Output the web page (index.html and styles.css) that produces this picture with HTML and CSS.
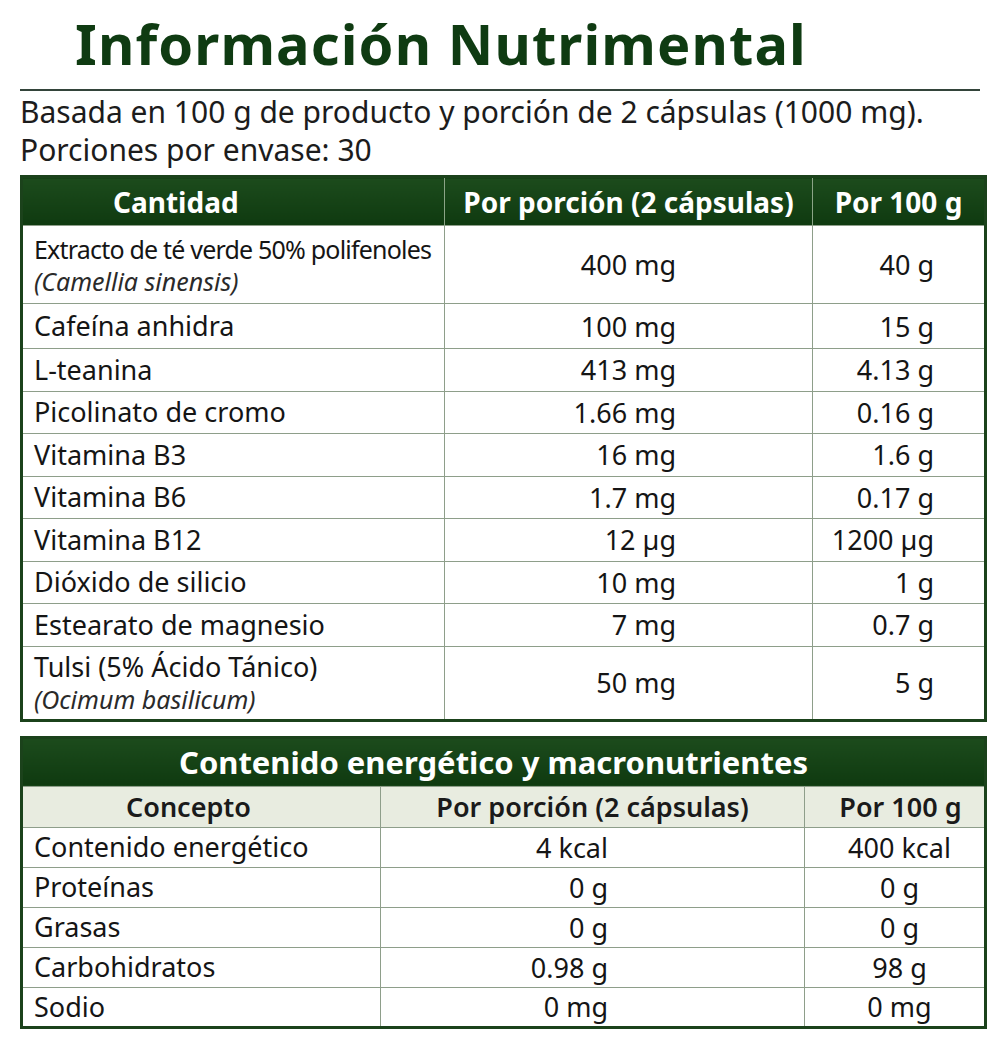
FILE: index.html
```html
<!DOCTYPE html>
<html lang="es">
<head>
<meta charset="utf-8">
<title>Información Nutrimental</title>
<link rel="stylesheet" href="styles.css">
</head>
<body>
<div class="page">
  <h1 class="title">Información Nutrimental</h1>
  <div class="rule"></div>
  <p class="intro">Basada en 100 g de producto y porción de 2 cápsulas (1000 mg).<br>Porciones por envase: 30</p>

  <table class="nt main">
    <colgroup><col class="c1"><col class="c2"><col class="c3"></colgroup>
    <thead>
      <tr class="head"><th class="h-name">Cantidad</th><th>Por porción (2 cápsulas)</th><th>Por 100 g</th></tr>
    </thead>
    <tbody>
      <tr class="tall1"><td class="name two"><span class="narrow">Extracto de té verde 50% polifenoles</span><br><em>(Camellia sinensis)</em></td><td class="v2">400 mg</td><td class="v3">40 g</td></tr>
      <tr class="r46"><td class="name">Cafeína anhidra</td><td class="v2">100 mg</td><td class="v3">15 g</td></tr>
      <tr><td class="name">L-teanina</td><td class="v2">413 mg</td><td class="v3">4.13 g</td></tr>
      <tr><td class="name">Picolinato de cromo</td><td class="v2">1.66 mg</td><td class="v3">0.16 g</td></tr>
      <tr><td class="name">Vitamina B3</td><td class="v2">16 mg</td><td class="v3">1.6 g</td></tr>
      <tr><td class="name">Vitamina B6</td><td class="v2">1.7 mg</td><td class="v3">0.17 g</td></tr>
      <tr><td class="name">Vitamina B12</td><td class="v2 mu">12 µg</td><td class="v3">1200 µg</td></tr>
      <tr><td class="name">Dióxido de silicio</td><td class="v2">10 mg</td><td class="v3">1 g</td></tr>
      <tr><td class="name">Estearato de magnesio</td><td class="v2">7 mg</td><td class="v3">0.7 g</td></tr>
      <tr class="tall2"><td class="name two">Tulsi (5% Ácido Tánico)<br><em>(Ocimum basilicum)</em></td><td class="v2">50 mg</td><td class="v3">5 g</td></tr>
    </tbody>
  </table>

  <table class="nt macro">
    <colgroup><col class="m1"><col class="m2"><col class="m3"></colgroup>
    <thead>
      <tr class="mtitle"><th colspan="3">Contenido energético y macronutrientes</th></tr>
      <tr class="sub"><th>Concepto</th><th>Por porción (2 cápsulas)</th><th>Por 100 g</th></tr>
    </thead>
    <tbody>
      <tr><td class="name">Contenido energético</td><td class="w2">4 kcal</td><td class="w3">400 kcal</td></tr>
      <tr><td class="name">Proteínas</td><td class="w2">0 g</td><td class="w3">0 g</td></tr>
      <tr><td class="name">Grasas</td><td class="w2">0 g</td><td class="w3">0 g</td></tr>
      <tr><td class="name">Carbohidratos</td><td class="w2">0.98 g</td><td class="w3">98 g</td></tr>
      <tr><td class="name">Sodio</td><td class="w2">0 mg</td><td class="w3">0 mg</td></tr>
    </tbody>
  </table>
</div>
</body>
</html>
```

FILE: styles.css
```css
* { box-sizing: border-box; }
html, body { margin: 0; padding: 0; background: #ffffff; }
body {
  font-family: "Noto Sans", "Open Sans", "DejaVu Sans", sans-serif;
  color: #1a1a1a;
  width: 1000px;
  height: 1052px;
  overflow: hidden;
}
.page { padding: 0 16px 0 20px; }

.title {
  margin: 0;
  padding: 11px 0 0 55px;
  height: 89px;
  font-size: 56px;
  line-height: 64px;
  font-weight: 700;
  color: #0f3b12;
  letter-spacing: 1.1px;
  white-space: nowrap;
}
.rule {
  width: 960px;
  height: 2px;
  background: #33443a;
}
.intro {
  margin: 0;
  padding: 2px 0 0 0;
  height: 84px;
  font-size: 30px;
  line-height: 38px;
  color: #1c1c1c;
  white-space: nowrap;
}

.nt {
  width: 964px;
  border-collapse: collapse;
  table-layout: fixed;
}
.nt td, .nt th { padding: 0; }
.nt td { border: 1px solid #8e9e8a; font-size: 27px; color: #151515; }

.main { border: 3px solid #1b421b; }
.main .c1 { width: 423px; }
.main .c2 { width: 368px; }
.main .c3 { width: 173px; }
.main .head th {
  height: 49px;
  background: linear-gradient(#1c4b1c, #0f3a10);
  color: #ffffff;
  font-size: 28px;
  font-weight: 700;
  text-align: center;
  border-left: 1px solid #8ba487;
  white-space: nowrap;
}
.main .head th:first-child { border-left: none; }
.main .head .h-name { text-align: left; padding-left: 90px; }
.main tbody tr { height: 42.5px; }
.main tbody tr.tall1 { height: 78px; }
.main tbody tr.r46 { height: 45px; }
.main tbody tr.tall2 { height: 74px; }
.name { padding-left: 11px !important; line-height: 30px; white-space: nowrap; }
.name.two { line-height: 32px; }
.narrow { letter-spacing: -0.8px; font-size: 25px; }
.name em { font-size: 25px; color: #2a2a2a; }
.v2 { text-align: right; padding-right: 136px !important; }
.v3 { text-align: right; padding-right: 50px !important; }

.macro { margin-top: 14px; border: 3px solid #1b421b; }
.macro .m1 { width: 359px; }
.macro .m2 { width: 424px; }
.macro .m3 { width: 181px; }
.mtitle th {
  height: 49px;
  background: linear-gradient(#1c4b1c, #0f3a10);
  color: #ffffff;
  font-size: 31px;
  font-weight: 700;
  text-align: center;
  padding-right: 20px !important;
  white-space: nowrap;
}
.sub th {
  height: 41px;
  background: #e8ece0;
  color: #1a1a1a;
  font-size: 27px;
  font-weight: 600;
  text-align: center;
  border: 1px solid #8e9e8a;
  white-space: nowrap;
}
.sub th:first-child { padding-right: 26px; }
.sub th:last-child { padding-left: 12px; }
.macro tbody tr { height: 40px; }
.w2 { text-align: right; padding-right: 196px !important; }
.w3 { text-align: center; padding-left: 10px !important; }
```
